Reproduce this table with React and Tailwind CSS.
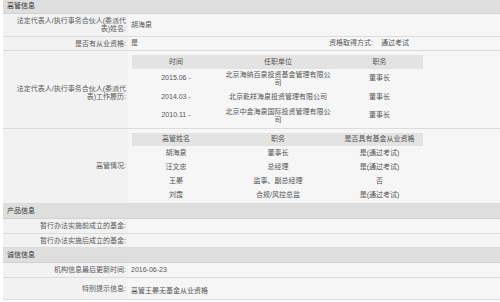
import React from "react";

const jobs = [
  { t: "2015.06 -", c: "北京海纳百泉投资基金管理有限公司", p: "董事长", h: "h-[19px]" },
  { t: "2014.03 -", c: "北京乾祥海泉投资管理有限公司", p: "董事长", h: "h-[18px]" },
  { t: "2010.11 -", c: "北京中金海泉国际投资管理有限公司", p: "董事长", h: "h-[19px]" },
];

const execs = [
  ["胡海泉", "董事长", "是(通过考试)"],
  ["汪文忠", "总经理", "是(通过考试)"],
  ["王晏", "监事、副总经理", "否"],
  ["刘霞", "合规/风控总监", "是(通过考试)"],
];

function Header({ children, h }) {
  return (
    <div className={`${h} flex items-center pl-[4px] bg-[#dedede] border-b border-[#d2d2d2] text-[#333]`}>
      {children}
    </div>
  );
}

function Label({ children, className = "" }) {
  return (
    <div className={`w-[125px] shrink-0 flex items-center justify-end text-right pr-[2px] pl-[10px] bg-[#f2f2f2] text-[#5a5a5a] leading-[8px] ${className}`}>
      <span>{children}</span>
    </div>
  );
}

function Row({ h, label, children, valueClass = "" }) {
  return (
    <div className={`${h} flex border-b border-[#dcdcdc]`}>
      <Label>{label}</Label>
      <div className={`flex-1 flex items-center pl-[3px] bg-[#f6f6f6] text-[#555] ${valueClass}`}>{children}</div>
    </div>
  );
}

export default function App() {
  return (
    <div className="w-[500px] h-[302px] bg-white pl-[3px] font-['Liberation_Sans','Noto_Sans_CJK_SC',sans-serif] text-[7px] overflow-hidden">
      <Header h="h-[14px]">高管信息</Header>
      <Row h="h-[23px]" label="法定代表人/执行事务合伙人(委派代表)姓名:">胡海泉</Row>
      <div className="h-[14px] flex border-b border-[#dcdcdc]">
        <Label>是否有从业资格:</Label>
        <div className="w-[124px] flex items-center pl-[3px] bg-[#f6f6f6] text-[#555]">是</div>
        <div className="w-[124px] flex items-center justify-end pr-[3px] bg-[#f6f6f6] text-[#5a5a5a]">资格取得方式:</div>
        <div className="flex-1 flex items-center pl-[5px] bg-[#f6f6f6] text-[#555]">通过考试</div>
      </div>
      <div className="h-[78px] flex border-b border-[#dcdcdc]">
        <Label className="pt-[6px]">法定代表人/执行事务合伙人(委派代表)工作履历:</Label>
        <div className="flex-1 bg-[#f6f6f6] pl-[4px] pt-[4px] text-[#555]">
          <div className="w-[291px]">
            <div className="h-[14px] flex items-center bg-[#e3e3e3]">
              <div className="w-[88px] text-center">时间</div>
              <div className="w-[116px] text-center">任职单位</div>
              <div className="w-[87px] text-center">职务</div>
            </div>
            {jobs.map((j) => (
              <div key={j.t} className={`${j.h} flex items-center`}>
                <div className="w-[88px] text-center">{j.t}</div>
                <div className="w-[116px] px-[4px] text-center leading-[8px]">{j.c}</div>
                <div className="w-[87px] text-center">{j.p}</div>
              </div>
            ))}
          </div>
        </div>
      </div>
      <div className="h-[75px] flex border-b border-[#dcdcdc]">
        <Label>高管情况:</Label>
        <div className="flex-1 bg-[#f6f6f6] pl-[4px] pt-[4px] text-[#555]">
          <div className="w-[291px]">
            <div className="h-[13px] flex items-center bg-[#e3e3e3]">
              <div className="w-[88px] text-center">高管姓名</div>
              <div className="w-[116px] text-center">职务</div>
              <div className="w-[87px] text-center">是否具有基金从业资格</div>
            </div>
            {execs.map((e) => (
              <div key={e[0]} className="h-[14px] flex items-center">
                <div className="w-[88px] text-center">{e[0]}</div>
                <div className="w-[116px] text-center">{e[1]}</div>
                <div className="w-[87px] text-center">{e[2]}</div>
              </div>
            ))}
          </div>
        </div>
      </div>
      <Header h="h-[15px]">产品信息</Header>
      <Row h="h-[15px]" label="暂行办法实施前成立的基金:"></Row>
      <Row h="h-[14px]" label="暂行办法实施后成立的基金:"></Row>
      <Header h="h-[15px]">诚信信息</Header>
      <Row h="h-[15px]" label="机构信息最后更新时间:">2016-06-23</Row>
      <Row h="h-[22px]" label="特别提示信息:" valueClass="pt-[6px]">高管王晏无基金从业资格</Row>
    </div>
  );
}
